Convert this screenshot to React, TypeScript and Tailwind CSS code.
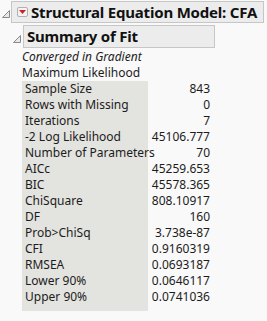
import React from 'react';

type FitRow = { label: string; value: string };

const rows: FitRow[] = [
  { label: 'Sample Size', value: '843' },
  { label: 'Rows with Missing', value: '0' },
  { label: 'Iterations', value: '7' },
  { label: '-2 Log Likelihood', value: '45106.777' },
  { label: 'Number of Parameters', value: '70' },
  { label: 'AICc', value: '45259.653' },
  { label: 'BIC', value: '45578.365' },
  { label: 'ChiSquare', value: '808.10917' },
  { label: 'DF', value: '160' },
  { label: 'Prob>ChiSq', value: '3.738e-87' },
  { label: 'CFI', value: '0.9160319' },
  { label: 'RMSEA', value: '0.0693187' },
  { label: 'Lower 90%', value: '0.0646117' },
  { label: 'Upper 90%', value: '0.0741036' },
];

// little gray disclosure triangle (open state)
const Disclosure = () => (
  <svg width="8" height="8" viewBox="0 0 8 8" className="shrink-0">
    <path d="M7.5 0.5 L7.5 7.5 L0.5 7.5 Z" fill="#e8e8e8" stroke="#8a8a8a" strokeWidth="1" />
  </svg>
);

const RedMenu = () => (
  <div className="w-[11px] h-[10px] shrink-0 rounded-[2px] border border-[#b0b0b0] bg-[#f4f4f4] flex items-center justify-center">
    <svg width="7" height="4" viewBox="0 0 7 4">
      <path d="M0 0 L7 0 L3.5 4 Z" fill="#d42020" />
    </svg>
  </div>
);

export default function App() {
  return (
    <div
      className="w-[267px] h-[321px] overflow-hidden bg-[#f9f9f9] text-[#1c1c1c] pt-px"
      style={{ fontFamily: '"Noto Sans", "Open Sans", sans-serif' }}
    >
      {/* top outline node */}
      <div className="flex items-center">
        <div className="w-[11px] flex justify-end pr-[1px] pt-[4px]">
          <Disclosure />
        </div>
        <div className="w-[253px] h-[22px] border border-[#c6c6c6] bg-[#ececec] flex items-center gap-[3px] pl-[5px]">
          <RedMenu />
          <span className="text-[15px] font-bold leading-none tracking-[-0.2px] text-[#111]">
            Structural Equation Model: CFA
          </span>
        </div>
      </div>

      {/* Summary of Fit node */}
      <div className="flex items-center mt-[2px] pl-[12px]">
        <div className="w-[11px] flex justify-end pr-[2px] pt-[4px]">
          <Disclosure />
        </div>
        <div className="w-[192px] h-[23px] border border-[#c6c6c6] bg-[#ececec] flex items-center pl-[3px]">
          <span className="text-[15px] font-bold leading-none tracking-[-0.2px] text-[#111]">Summary of Fit</span>
        </div>
      </div>

      <div className="pl-[22px] mt-px">
        <div className="h-[16px] flex items-center text-[12px] italic leading-none">Converged in Gradient</div>
        <div className="h-[16px] flex items-center text-[12px] leading-none">Maximum Likelihood</div>

        <div className="flex text-[12px] leading-none">
          <div className="w-[126px] bg-[#e3e3df] pl-[3px] pb-[6px]">
            {rows.map((r) => (
              <div key={r.label} className="h-[16px] flex items-center whitespace-nowrap">
                {r.label}
              </div>
            ))}
          </div>
          <div className="w-[62px]">
            {rows.map((r) => (
              <div key={r.label} className="h-[16px] flex items-center justify-end">
                {r.value}
              </div>
            ))}
          </div>
        </div>
      </div>
    </div>
  );
}
